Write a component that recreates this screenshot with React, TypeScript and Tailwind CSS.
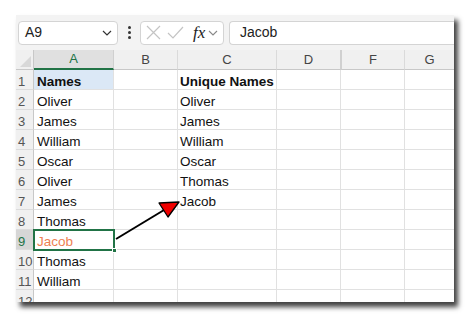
import React from "react";

const rows: [string, string, string][] = [
  ["1", "Names", "Unique Names"],
  ["2", "Oliver", "Oliver"],
  ["3", "James", "James"],
  ["4", "William", "William"],
  ["5", "Oscar", "Oscar"],
  ["6", "Oliver", "Thomas"],
  ["7", "James", "Jacob"],
  ["8", "Thomas", ""],
  ["9", "Jacob", ""],
  ["10", "Thomas", ""],
  ["11", "William", ""],
  ["12", "", ""],
];

const font = { fontFamily: '"Liberation Sans", Arial, sans-serif' };

export default function App() {
  return (
    <div className="w-[471px] h-[319px] bg-white pl-[16px] pt-[15px] overflow-hidden" style={font}>
      <div className="w-[438px] h-[287px] bg-white shadow-[4px_5px_5px_rgba(0,0,0,0.75)] overflow-hidden flex flex-col">
        {/* formula bar */}
        <div className="h-[35px] bg-[#f3f3f3] flex items-center pl-[2px] shrink-0">
          <div className="w-[100px] h-[24px] bg-white border border-[#d4d4d4] rounded-[4px] flex items-center justify-between pl-[6px] pr-[5px]">
            <span className="text-[14px] text-[#222]">A9</span>
            <svg width="10" height="6" viewBox="0 0 10 6"><path d="M1 1l4 4 4-4" fill="none" stroke="#333" strokeWidth="1.2" /></svg>
          </div>
          <div className="w-[22px] flex flex-col items-center gap-[2px]">
            <span className="w-[3px] h-[3px] bg-[#333] rounded-full" />
            <span className="w-[3px] h-[3px] bg-[#333] rounded-full" />
            <span className="w-[3px] h-[3px] bg-[#333] rounded-full" />
          </div>
          <div className="w-[84px] h-[24px] bg-white border border-[#d4d4d4] rounded-[4px] flex items-center pl-[4px]">
            <svg width="17" height="17" viewBox="0 0 17 17"><path d="M2 2l13 13M15 2L2 15" stroke="#c4c4c4" strokeWidth="1.2" fill="none" /></svg>
            <svg width="17" height="17" viewBox="0 0 17 17" className="ml-[5px]"><path d="M1 9l5 5L16 3" stroke="#c4c4c4" strokeWidth="1.2" fill="none" /></svg>
            <span className="ml-[9px] text-[17px] italic text-[#222] leading-none" style={{ fontFamily: '"Liberation Serif", "Times New Roman", serif' }}>fx</span>
            <svg width="10" height="6" viewBox="0 0 10 6" className="ml-[3px]"><path d="M1 1l4 4 4-4" fill="none" stroke="#888" strokeWidth="1.1" /></svg>
          </div>
          <div className="ml-[5px] flex-1 h-[24px] bg-white border border-[#d4d4d4] border-r-0 rounded-l-[4px] flex items-center pl-[10px]">
            <span className="text-[14px] text-[#222]">Jacob</span>
          </div>
        </div>
        {/* grid */}
        <div className="relative flex-1">
          <div className="grid grid-cols-[18px_80px_64px_99px_64px_64px_49px] auto-rows-[20px]">
            {/* header */}
            <div className="bg-[#f0f0f0] border-b border-r border-[#c8c8c8] relative">
              <svg className="absolute right-[2px] bottom-[2px]" width="11" height="11" viewBox="0 0 11 11"><path d="M11 0V11H0Z" fill="#d8d8d8" /></svg>
            </div>
            <div className="bg-[#e0e0e0] border-b-2 border-b-[#217346] border-r border-r-[#d0d0d0] flex items-center justify-center leading-[16px] text-[13px] text-[#217346]">A</div>
            <div className="bg-[#f0f0f0] border-b border-r border-[#c8c8c8] border-r-[#dadada] flex items-center justify-center leading-[16px] text-[13px] text-[#444]">B</div>
            <div className="bg-[#f0f0f0] border-b border-r border-[#c8c8c8] border-r-[#dadada] flex items-center justify-center leading-[16px] text-[13px] text-[#444]">C</div>
            <div className="bg-[#f0f0f0] border-b border-r border-[#c8c8c8] border-r-[#d0d0d0] flex items-center justify-center leading-[16px] text-[13px] text-[#444]">D</div>
            <div className="bg-[#f0f0f0] border-b border-r border-l border-[#c8c8c8] border-r-[#dadada] border-l-[#d0d0d0] flex items-center justify-center leading-[16px] text-[13px] text-[#444]">F</div>
            <div className="bg-[#f0f0f0] border-b border-[#c8c8c8] flex items-center justify-center leading-[16px] text-[13px] text-[#444]">G</div>
            {rows.map(([n, a, c]) => {
              const sel = n === "9";
              const first = n === "1";
              return (
                <React.Fragment key={n}>
                  <div className={`${sel ? "bg-[#d6d6d6] text-[#217346]" : "bg-[#f0f0f0] text-[#555]"} border-r border-r-[#c8c8c8] border-b border-b-[#dcdcdc] flex items-end pl-[2px] text-[13px] leading-[15px] overflow-hidden whitespace-nowrap`}>{n}</div>
                  <div className={`${first ? "bg-[#dbe8f6] font-bold" : ""} ${sel ? "text-[#ee7f52]" : "text-[#111]"} border-r border-b border-[#e1e1e1] flex items-end pl-[3px] text-[13.5px] leading-[15px] whitespace-nowrap`}>{a}</div>
                  <div className="border-r border-b border-[#e1e1e1]" />
                  <div className={`${first ? "font-bold" : ""} text-[#111] border-r border-b border-[#e1e1e1] flex items-end pl-[2px] text-[13.5px] leading-[15px] whitespace-nowrap`}>{c}</div>
                  <div className="border-r border-b border-[#e1e1e1]" />
                  <div className="border-r border-b border-[#e1e1e1]" />
                  <div className="border-b border-[#e1e1e1]" />
                </React.Fragment>
              );
            })}
          </div>
          {/* selection */}
          <div className="absolute left-[17px] top-[179px] w-[82px] h-[22px] border-2 border-[#217346]" />
          <div className="absolute left-[96px] top-[198px] w-[5px] h-[5px] bg-[#217346] border border-white" />
          {/* arrow */}
          <svg className="absolute left-0 top-0" width="438" height="252" viewBox="0 0 438 252">
            <line x1="100" y1="189" x2="153" y2="157" stroke="#000" strokeWidth="2" />
            <path d="M143 153L163 152L152 167Z" fill="#f00000" stroke="#000" strokeWidth="1.3" strokeLinejoin="round" />
          </svg>
        </div>
      </div>
    </div>
  );
}
